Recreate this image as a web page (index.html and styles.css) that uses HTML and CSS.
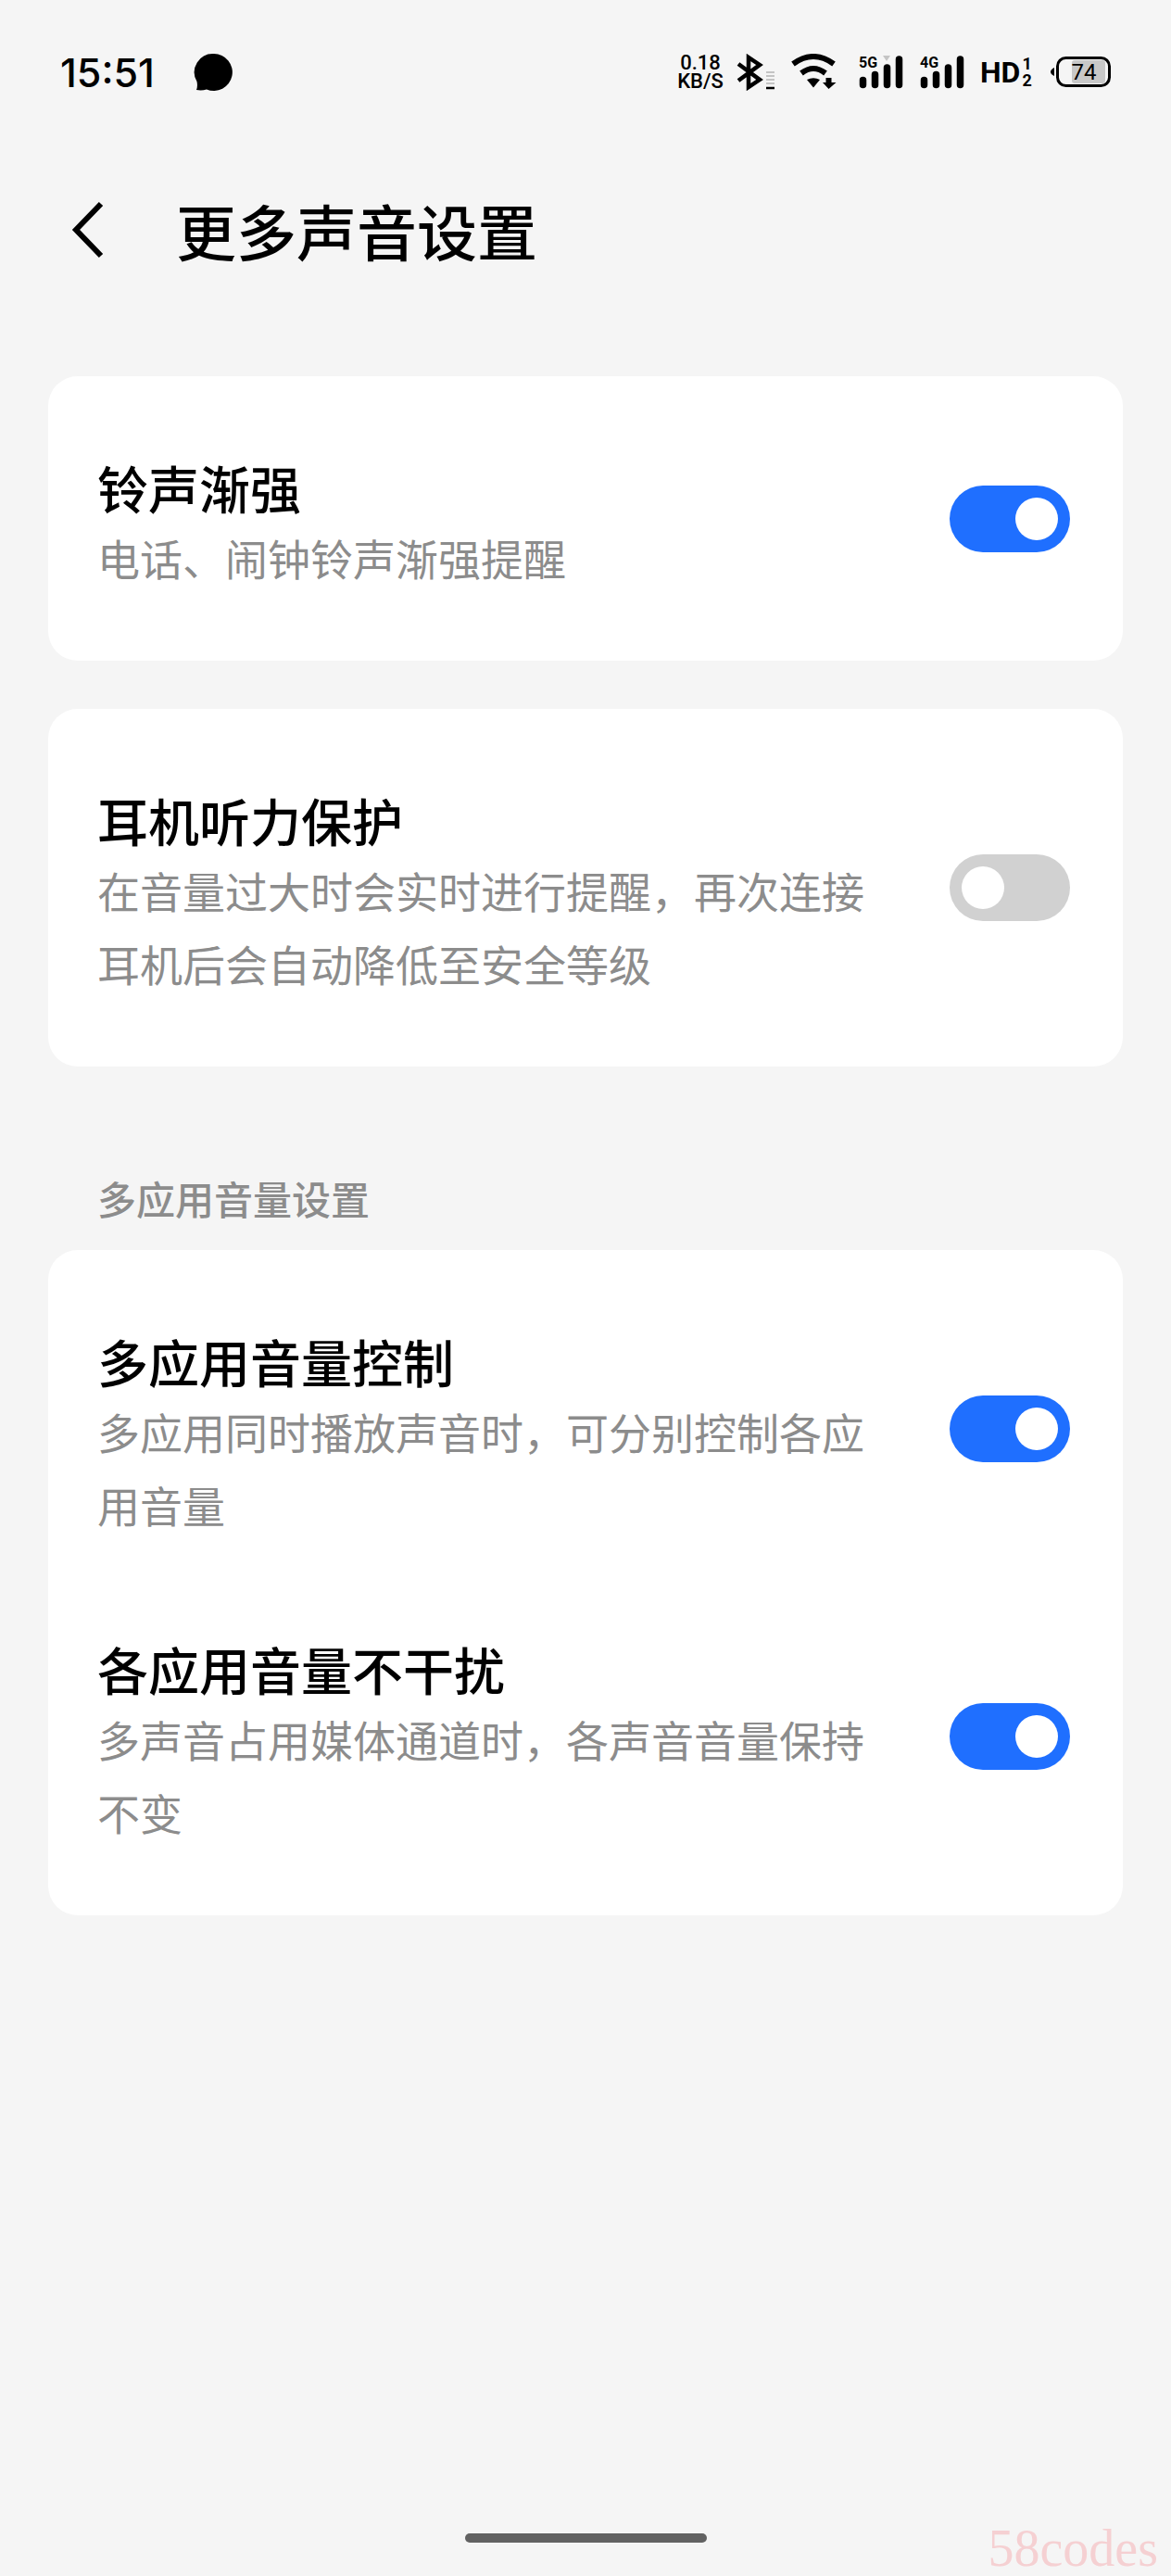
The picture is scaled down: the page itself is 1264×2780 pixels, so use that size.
FILE: index.html
```
<!DOCTYPE html>
<html lang="zh-CN">
<head>
    <meta charset="UTF-8">
    <meta name="viewport" content="width=device-width, initial-scale=1.0">
    <title>更多声音设置</title>
    <link rel="stylesheet" href="styles.css">
</head>
<body>

    <div class="status-bar">
        <span class="time">15:51</span>
        <svg class="bubble" width="42" height="42" viewBox="0 0 42 42">
            <path d="M22 1a20 20 0 1 1-8 38.400q-5 1.600-11 0.600q1.600-4 0.500-9A20 20 0 0 1 22 1z"/>
        </svg>

        <div class="status-icons">
            <div class="net-speed">
                <span>0.18</span>
                <span>KB/S</span>
            </div>
            <!-- Bluetooth -->
            <svg width="45" height="40" viewBox="0 0 45 40">
                <path d="M2 11L25 28L13 36V4L25 12L2 29" fill="none" stroke="#000" stroke-width="4.500"/>
                <path d="M32 20h9M32 24h9M32 28h9M32 32h9" stroke="#c4c4c4" stroke-width="2"/>
                <path d="M32 37h9" stroke="#000" stroke-width="2.500"/>
            </svg>
            <!-- Wi-Fi -->
            <svg width="58" height="40" viewBox="0 0 58 40">
                <path d="M2 11Q24-5 46 11M11 21Q24 11 37 21" fill="none" stroke="#000" stroke-width="6"/>
                <path d="M17 28Q24 24.500 31 28L24 36.500z"/>
                <path d="M37.500 26h6v5h5L40.500 38L34 31h3.500z"/>
            </svg>
            <!-- 5G -->
            <svg width="52" height="40" viewBox="0 0 52 40">
                <text class="net-type" x="1" y="15">5G</text>
                <path d="M27 2h8l-4 6z" fill="#c4c4c4"/>
                <path d="M5.500 28.500v5M18.500 22.500v11M31.500 15v18.500M44.500 6v27.500" stroke="#000" stroke-width="7.500" stroke-linecap="round"/>
            </svg>
            <!-- 4G -->
            <svg width="52" height="40" viewBox="0 0 52 40">
                <text class="net-type" x="1" y="15">4G</text>
                <path d="M5.500 28.500v5M18.500 22.500v11M31.500 15v18.500M44.500 6v27.500" stroke="#000" stroke-width="7.500" stroke-linecap="round"/>
            </svg>
            <div class="hd">
                <span>HD</span>
                <span class="sim"><span>1</span><span>2</span></span>
            </div>
            <!-- Battery -->
            <svg width="65" height="40" viewBox="0 0 65 40">
                <rect x="23" y="7" width="36" height="25" rx="3" fill="#c8c8c8"/>
                <rect x="7.500" y="4.500" width="56" height="30" rx="9" fill="none" stroke="#000" stroke-width="3"/>
                <path d="M4 15v9Q0 22 0 19.500Q0 17 4 15z"/>
                <text class="battery-level" x="36" y="28">74</text>
            </svg>
        </div>
    </div>

    <header class="header">
        <button class="back" type="button" aria-label="返回">
            <svg width="40" height="64" viewBox="0 0 40 64">
                <path d="M35 4L8 32L35 60" fill="none" stroke="#000" stroke-width="6"/>
            </svg>
        </button>
        <h1>更多声音设置</h1>
    </header>

    <main class="settings">
        <section class="card">
            <div class="row">
                <div class="text">
                    <label for="ring-rise">铃声渐强</label>
                    <p>电话、闹钟铃声渐强提醒</p>
                </div>
                <input class="switch" type="checkbox" id="ring-rise" checked>
            </div>
        </section>

        <section class="card">
            <div class="row">
                <div class="text">
                    <label for="hearing">耳机听力保护</label>
                    <p>在音量过大时会实时进行提醒，再次连接耳机后会自动降低至安全等级</p>
                </div>
                <input class="switch" type="checkbox" id="hearing">
            </div>
        </section>

        <h2>多应用音量设置</h2>
        <section class="card">
            <div class="row">
                <div class="text">
                    <label for="multi-volume">多应用音量控制</label>
                    <p>多应用同时播放声音时，可分别控制各应用音量</p>
                </div>
                <input class="switch" type="checkbox" id="multi-volume" checked>
            </div>
            <div class="row">
                <div class="text">
                    <label for="no-disturb">各应用音量不干扰</label>
                    <p>多声音占用媒体通道时，各声音音量保持不变</p>
                </div>
                <input class="switch" type="checkbox" id="no-disturb" checked>
            </div>
        </section>
    </main>

    <div class="home-bar"></div>
    <span class="watermark">58codes</span>

</body>
</html>
```
FILE: styles.css
```
* {
    box-sizing: border-box;
}
body {
    font-family: 'Noto Sans CJK SC', sans-serif;
    background-color: #f5f5f5;
    color: #000;
    margin: 0;
    display: flex;
    flex-direction: column;
    min-height: 100vh;
}
h1, h2, p {
    margin: 0;
}
.status-bar {
    display: flex;
    align-items: center;
    height: 156px;
    padding: 0 65px;
    font-family: Inter, sans-serif;
}
.time {
    font-size: 43px;
    font-weight: 500;
}
.bubble {
    margin-left: 42px;
}
.status-icons {
    display: flex;
    align-items: center;
    gap: 14px;
    margin-left: auto;
}
.net-speed {
    display: flex;
    flex-direction: column;
    align-items: center;
    width: 50px;
    font-family: Roboto, sans-serif;
    font-size: 22px;
    font-weight: 500;
    line-height: 20px;
}
.net-type {
    font-family: Roboto, sans-serif;
    font-size: 16px;
    font-weight: 700;
}
.hd {
    display: flex;
    align-items: center;
    gap: 2px;
    width: 62px;
    font-family: 'Liberation Sans Narrow', Roboto, sans-serif;
    font-size: 32px;
    font-weight: 700;
    line-height: 40px;
}
.sim {
    display: flex;
    flex-direction: column;
    font-size: 18px;
    line-height: 18px;
}
.battery-level {
    font-family: Roboto, sans-serif;
    font-size: 24px;
    font-weight: 400;
    text-anchor: middle;
}
.header {
    display: flex;
    align-items: center;
    gap: 76px;
    height: 184px;
    padding: 0 74px;
}
.back {
    display: flex;
    padding: 0;
    border: none;
    background: none;
    cursor: pointer;
}
h1 {
    font-size: 65px;
    font-weight: 500;
    line-height: 96px;
}
.settings {
    padding: 66px 52px 0;
}
.card {
    background-color: #fff;
    border-radius: 32px;
    padding: 27px 57px 27px 53px;
    margin-bottom: 52px;
}
.row {
    display: flex;
    align-items: center;
    justify-content: space-between;
    gap: 60px;
}
.text {
    padding: 56px 0 45px;
}
.text label {
    display: block;
    font-size: 55px;
    font-weight: 500;
    line-height: 73px;
}
.text p {
    font-size: 46px;
    line-height: 79px;
    color: #8c8c8c;
}
h2 {
    font-size: 42px;
    font-weight: 500;
    line-height: 60px;
    color: #8c8c8c;
    padding: 60px 53px 26px;
}
.switch {
    appearance: none;
    flex: none;
    display: flex;
    align-items: center;
    width: 130px;
    height: 72px;
    margin: 0;
    padding: 0 13px;
    border-radius: 36px;
    background-color: #d1d1d1;
    cursor: pointer;
}
.switch::before {
    content: '';
    width: 46px;
    height: 46px;
    border-radius: 50%;
    background-color: #fff;
}
.switch:checked {
    justify-content: flex-end;
    background-color: #1f6fff;
}
.home-bar {
    width: 261px;
    height: 10px;
    margin: auto auto 36px;
    border-radius: 5px;
    background-color: #626262;
}
.watermark {
    position: absolute;
    right: 14px;
    bottom: 0;
    font-family: 'Liberation Serif', serif;
    font-size: 56px;
    line-height: 60px;
    color: #f5d0d2;
}
```
